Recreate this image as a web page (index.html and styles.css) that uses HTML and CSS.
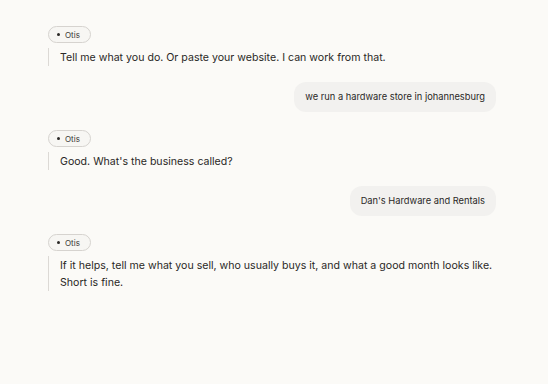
FILE: index.html
```html
<!DOCTYPE html>
<html>
<head>
<meta charset="utf-8">
<link rel="stylesheet" href="styles.css">
</head>
<body>
<div class="chat">
  <div class="bot">
    <div class="tag"><span class="dot"></span>Otis</div>
    <div class="msg">Tell me what you do. Or paste your website. I can work from that.</div>
  </div>
  <div class="user"><div class="bubble">we run a hardware store in johannesburg</div></div>
  <div class="bot">
    <div class="tag"><span class="dot"></span>Otis</div>
    <div class="msg">Good. What's the business called?</div>
  </div>
  <div class="user"><div class="bubble">Dan's Hardware and Rentals</div></div>
  <div class="bot">
    <div class="tag"><span class="dot"></span>Otis</div>
    <div class="msg">If it helps, tell me what you sell, who usually buys it, and what a good month looks like. Short is fine.</div>
  </div>
</div>
</body>
</html>
```
FILE: styles.css
```css
html, body { margin: 0; padding: 0; }
body {
  background: #fbfaf7;
  font-family: Inter, "Noto Sans", sans-serif;
  color: #2a2826;
  width: 548px;
  height: 384px;
}
.chat {
  padding: 26px 52px 0 48px;
  display: flex;
  flex-direction: column;
}
.bot { display: flex; flex-direction: column; align-items: flex-start; }
.tag {
  display: flex;
  align-items: center;
  gap: 5px;
  height: 15px;
  padding: 0 10px 0 8px;
  border: 1px solid #d6d3cf;
  border-radius: 9px;
  background: #f7f6f3;
  font-size: 8px;
  color: #3a3835;
}
.dot { width: 3px; height: 3px; border-radius: 50%; background: #2a2826; }
.msg {
  margin-top: 5px;
  border-left: 1px solid #dcd9d5;
  padding: 1px 0 0 11px;
  font-size: 10.6px;
  line-height: 17px;
  max-width: 440px;
}
.user { display: flex; justify-content: flex-end; margin: 16px 0 18px; }
.bubble {
  background: #f2f1ef;
  border-radius: 12px;
  padding: 8px 11px;
  font-size: 9.3px;
  line-height: 14px;
  color: #2a2826;
}
```
